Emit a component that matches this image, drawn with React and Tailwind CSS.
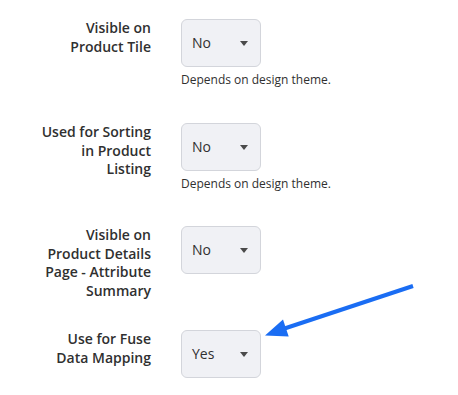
import React from "react";

function Select({ value }) {
  return (
    <div className="flex h-[48px] w-[80px] items-center justify-between rounded-[6px] border border-[#d3d5db] bg-[#f0f1f5] pl-[10px] pr-[12px]">
      <span className="text-[14px] leading-none text-[#303030]">{value}</span>
      <svg width="8" height="5" viewBox="0 0 8 5" className="mt-[1px]">
        <polygon points="0,0 8,0 4,5" fill="#4a4a4a" />
      </svg>
    </div>
  );
}

function Row({ label, value, help, h }) {
  return (
    <div className={`flex ${h}`}>
      <div className="w-[151px] text-right text-[14px] font-semibold leading-[18.5px] text-[#303030]">
        {label.map((l, i) => (
          <div key={i}>{l}</div>
        ))}
      </div>
      <div className="ml-[30px] flex flex-col">
        <Select value={value} />
        {help && (
          <div className="mt-[5px] text-[12px] leading-[16px] text-[#303030]">{help}</div>
        )}
      </div>
    </div>
  );
}

export default function App() {
  return (
    <div
      className="relative h-[395px] w-[458px] overflow-hidden bg-white pt-[19px]"
      style={{ fontFamily: '"Open Sans", "Noto Sans", sans-serif' }}
    >
      <Row label={["Visible on", "Product Tile"]} value="No" help="Depends on design theme." h="h-[104px]" />
      <Row label={["Used for Sorting", "in Product", "Listing"]} value="No" help="Depends on design theme." h="h-[103px]" />
      <Row label={["Visible on", "Product Details", "Page - Attribute", "Summary"]} value="No" h="h-[104px]" />
      <Row label={["Use for Fuse", "Data Mapping"]} value="Yes" h="h-[60px]" />
      <svg className="absolute left-0 top-0" width="458" height="395" viewBox="0 0 458 395">
        <line x1="413" y1="286" x2="280" y2="330" stroke="#1a6df3" strokeWidth="4" strokeLinecap="butt" />
        <polygon points="265,335.5 283,319.6 288.7,336.6" fill="#1a6df3" />
      </svg>
    </div>
  );
}
